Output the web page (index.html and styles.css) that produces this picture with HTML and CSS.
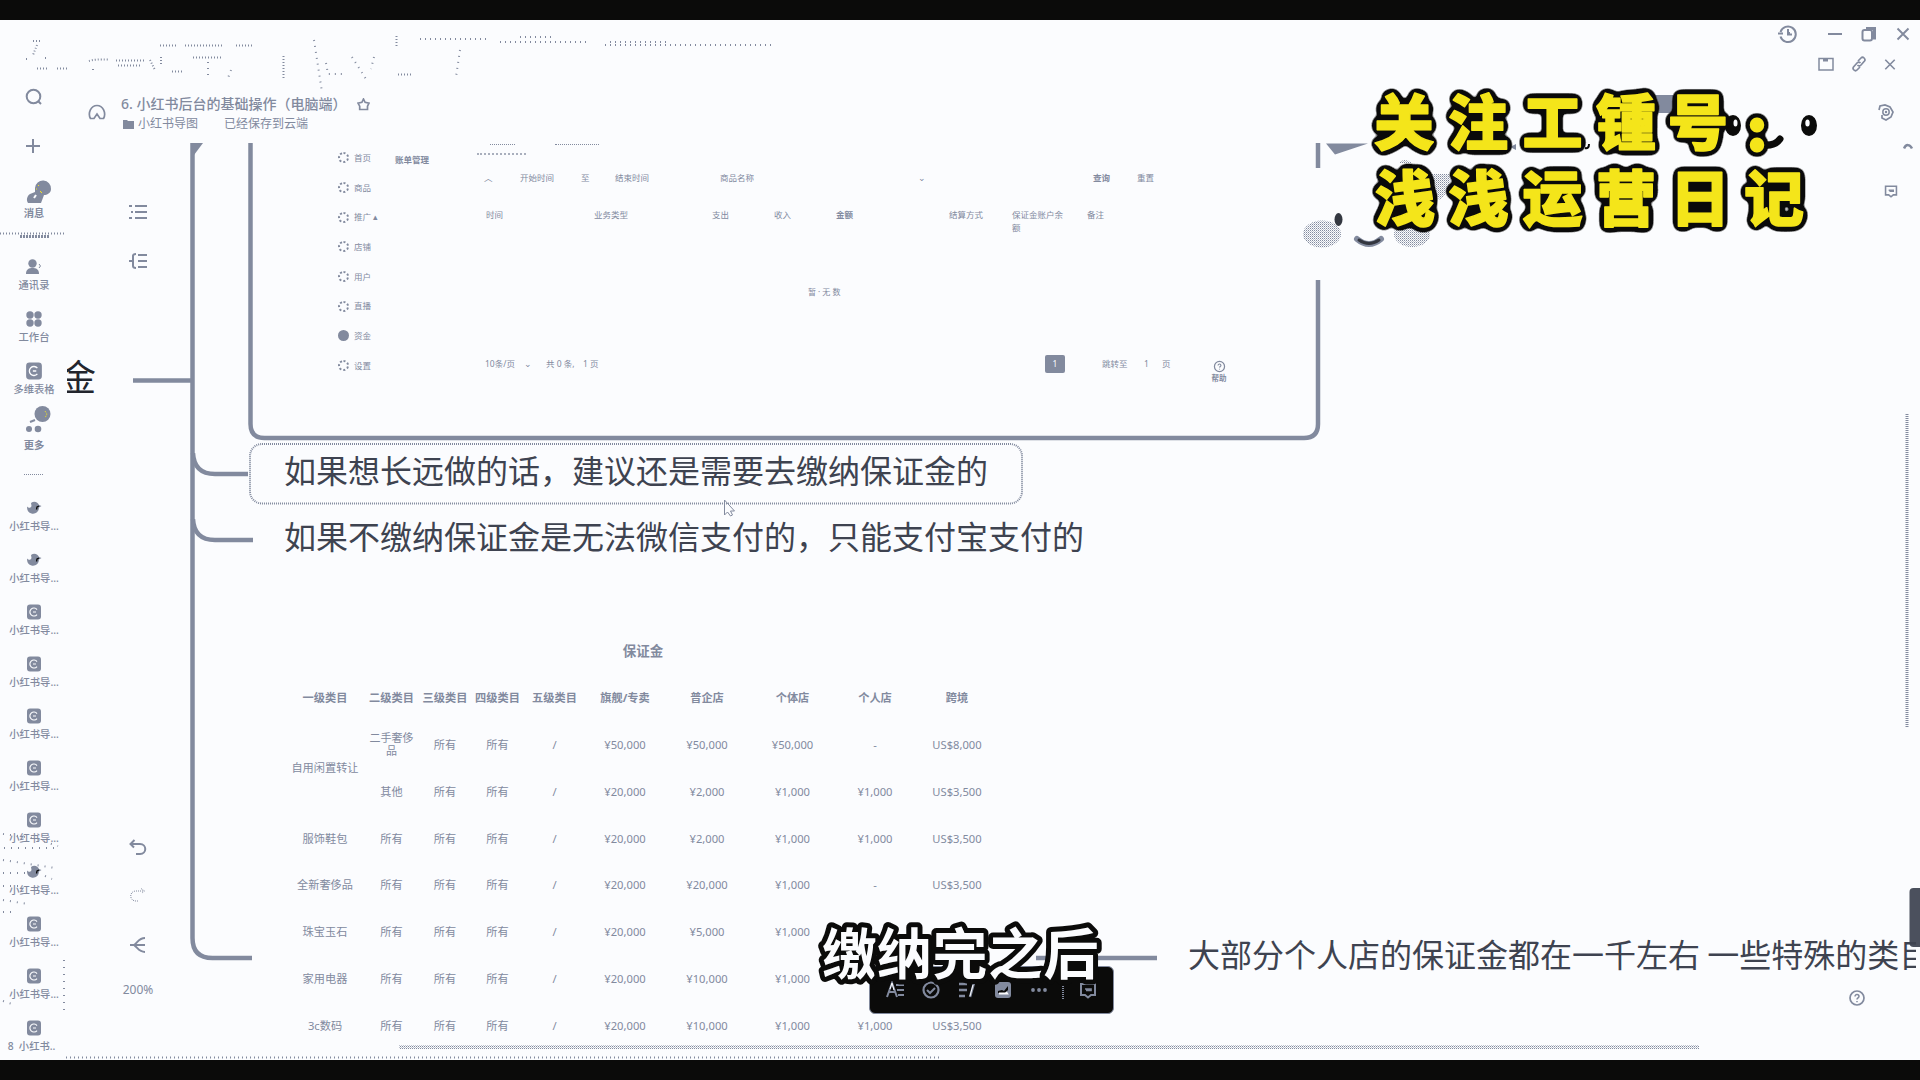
FILE: index.html
```html
<!DOCTYPE html>
<html lang="zh-CN">
<head>
<meta charset="utf-8">
<title>6. 小红书后台的基础操作（电脑端）</title>
<link rel="stylesheet" href="styles.css">
</head>
<body>
<svg class="defs" width="0" height="0">
  <defs>
    <pattern id="dots" width="2" height="2" patternUnits="userSpaceOnUse"><rect width="1" height="1" fill="#828a9e" stroke="none"/><rect x="1" y="1" width="1" height="1" fill="#828a9e" stroke="none" opacity=".5"/></pattern>
    <filter id="outline" x="-5%" y="-10%" width="110%" height="120%" color-interpolation-filters="sRGB">
      <feGaussianBlur in="SourceAlpha" stdDeviation="3.500"/>
      <feComponentTransfer><feFuncR type="linear" slope="0" intercept=".043"/><feFuncG type="linear" slope="0" intercept=".043"/><feFuncB type="linear" slope="0" intercept=".04"/><feFuncA type="linear" slope="16" intercept="-0.800"/></feComponentTransfer>
      <feMerge><feMergeNode/><feMergeNode in="SourceGraphic"/></feMerge>
    </filter>
    <symbol id="doc" viewBox="0 0 16 16"><rect x="1" y="0.5" width="14" height="15" rx="3" fill="#828a9e" stroke="none"/><path d="M11 5.500a4 4 0 1 0 0 5M7 8h3" fill="none" stroke="#fbfcfe" stroke-width="1.200"/></symbol>
    <symbol id="swirl" viewBox="0 0 16 16"><path d="M1 6.500c1.500 2 4 1.500 4.500-.5L5 3c3-2.500 7-1 8 2l2.500 1-2.500 1.500C13 12 9 14.500 5.500 13.500 2 12.500 1 10 1 6.500z" fill="#828a9e" stroke="none"/><path d="M10.500 9.500l.5-2.500 2-1" fill="none" stroke="#0b0b0a" stroke-width="1.300"/></symbol>
    <symbol id="help" viewBox="0 0 18 18"><circle cx="9" cy="9" r="7" fill="none" stroke="#828a9e" stroke-width="1.700"/><path d="M7 7.500c0-2.700 4-2.500 4 0 0 1.400-2 1.500-2 3M9 12v1.200" fill="none" stroke="#828a9e" stroke-width="1.500"/></symbol>
    <symbol id="note" viewBox="0 0 18 18"><path d="M2 3h14v11h-4l-3 2.500L6 14H2z" fill="none" stroke="#828a9e" stroke-width="2"/><path d="M6 8h6v1.500H7" fill="none" stroke="#828a9e" stroke-width="1.700"/></symbol>
    <symbol id="close" viewBox="0 0 14 14"><path d="M1.500 1.500l11 11M12.500 1.500l-11 11" stroke="#828a9e" stroke-width="1.900"/></symbol>
  </defs>
</svg>
<div class="screen">
  <div class="bar"></div>
  <div class="app">

    <nav class="sidebar">
      <div class="quick"><svg width="18" height="18" viewBox="0 0 18 18"><circle cx="8.500" cy="8.500" r="6.800"/><path d="M13 13l3 3"/></svg></div>
      <div class="quick"><svg width="16" height="16" viewBox="0 0 16 16"><path d="M1 8h14M8 1v14"/></svg></div>
      <div class="item msg"><svg width="30" height="24" viewBox="0 0 30 24"><path class="f" d="M10 8a8 8 0 0 1 16 1c0 4-4 6-7 6l-3 8H3c-2-3-1-7 2-9l5-2z"/><path d="M11 15l-2 3" stroke="#fbfcfe"/><path d="M13 5l1 1M11 9h1M15 11l2 2" stroke="#f4e51a" stroke-width="1"/></svg><span>消息</span></div>
      <div class="clip"></div>
      <div class="item"><svg width="18" height="18" viewBox="0 0 18 18"><circle class="f" cx="7.500" cy="5.500" r="4.200"/><path class="f" d="M1 16c0-5 3-6 6.500-6s6.500 1 6.500 6z"/><path d="M14 6l1.500 2-1.500 2" stroke-width="1"/></svg><span>通讯录</span></div>
      <div class="item"><svg width="18" height="18" viewBox="0 0 18 18"><circle class="f" cx="5" cy="5" r="3.700"/><circle class="f" cx="13" cy="5" r="3.700"/><circle class="f" cx="5" cy="13" r="3.700"/><circle class="f" cx="13" cy="13" r="3.700"/></svg><span>工作台</span></div>
      <div class="item"><svg width="18" height="18"><use href="#doc"/></svg><span>多维表格</span></div>
      <div class="item more"><svg width="30" height="28" viewBox="0 0 30 28"><circle class="f" cx="17.500" cy="9" r="8"/><path d="M20 6l2 3-2 4" stroke="#f4e51a" stroke-width="1" stroke-dasharray="1 1"/><circle class="f" cx="4" cy="24" r="3"/><circle class="f" cx="13" cy="24" r="3.300"/><path d="M5 17l5-2"/></svg><span>更多</span></div>
      <div class="sep"></div>
      <div class="item"><svg width="16" height="16"><use href="#swirl"/></svg><span>小红书导...</span></div>
      <div class="item"><svg width="16" height="16"><use href="#swirl"/></svg><span>小红书导...</span></div>
      <div class="item"><svg width="16" height="16"><use href="#doc"/></svg><span>小红书导...</span></div>
      <div class="item"><svg width="16" height="16"><use href="#doc"/></svg><span>小红书导...</span></div>
      <div class="item"><svg width="16" height="16"><use href="#doc"/></svg><span>小红书导...</span></div>
      <div class="item"><svg width="16" height="16"><use href="#doc"/></svg><span>小红书导...</span></div>
      <div class="item"><svg width="16" height="16"><use href="#doc"/></svg><span>小红书导...</span></div>
      <div class="item"><svg width="16" height="16"><use href="#swirl"/></svg><span>小红书导...</span></div>
      <div class="item"><svg width="16" height="16"><use href="#doc"/></svg><span>小红书导...</span></div>
      <div class="item"><svg width="16" height="16"><use href="#doc"/></svg><span>小红书导...</span></div>
      <div class="item last"><svg width="16" height="16"><use href="#doc"/></svg><span>8&nbsp; 小红书..</span></div>
    </nav>

    <div class="work">
      <div class="wincontrols">
        <div class="row one">
          <svg width="20" height="20" viewBox="0 0 20 20"><path d="M2.500 8a7.800 7.800 0 1 1 0 4.500M0 9.500h5"/><path d="M10 5v5.500h4M11 8v2"/></svg>
          <svg width="14" height="4" viewBox="0 0 14 4"><path d="M0 2h14"/></svg>
          <svg width="16" height="16" viewBox="0 0 16 16"><rect x="1.500" y="4" width="9.500" height="10.500" rx="2"/><path d="M5 2.500h8.500V12H12" stroke-width="3"/></svg>
          <svg width="14" height="14"><use href="#close"/></svg>
        </div>
        <div class="row two">
          <svg width="16" height="14" viewBox="0 0 16 14"><path d="M1 1.500h14v11.500H1z" stroke-width="1.500"/><path d="M5 3h5" stroke-width="3"/></svg>
          <svg width="16" height="16" viewBox="0 0 16 16"><path d="M7 5l3-3c2-2 5 1 3.500 3L10 9c-1 1-2.500 1-3.500 0M9 11l-3 3c-2 2-5-1-3.500-3L6 7c1-1 2.500-1 3.500 0" stroke-width="1.700"/></svg>
          <svg width="12" height="13"><use href="#close"/></svg>
        </div>
      </div>
      <header class="dochead">
        <svg class="home" width="18" height="18" viewBox="0 0 18 18"><path d="M6 15.500H2.500C-.5 10 3 2.500 9 2.500s9.500 7.500 6.500 13H12L9 11z"/></svg>
        <div class="names">
          <div class="title"><span>6. 小红书后台的基础操作（电脑端）</span><svg width="13" height="13" viewBox="0 0 13 13"><path d="M6.500 1l1.600 3.300 3.900.8-1.500 3v3.400H2.700V8.100L1 5.100l3.900-.8z"/></svg></div>
          <div class="path"><svg width="11" height="10" viewBox="0 0 11 10"><path class="f" d="M0 1h4l1 1h6v8H0z"/></svg><span>小红书导图</span><span class="saved">已经保存到云端</span></div>
        </div>
      </header>
      <div class="body">
        <div class="tools">
          <svg width="18" height="16" viewBox="0 0 18 16"><path d="M6 2h12M6 8h12M6 14h12" /><path d="M0 2h3M2 8h2M0 14h3"/></svg>
          <svg width="18" height="16" viewBox="0 0 18 16"><path d="M9 2h9M9 8h9M9 14h9M7 1q-3 0-3 2v10q0 2 3 2M0 8h5"/></svg>
          <svg class="undo" width="18" height="18" viewBox="0 0 18 18"><path d="M1 6h10c7 0 7 10 0 10H7M5.500 2L1.500 6l3.500 3.500"/></svg>
          <svg width="18" height="18" viewBox="0 0 18 18"><path d="M14 4H7C0 4 0 14 7 14h2M12 1.500L15.500 4 13 6" stroke-width="1" stroke-dasharray="1 1"/></svg>
          <svg width="18" height="18" viewBox="0 0 18 18"><path d="M1 9h15M16 2C10 2 9 6 5 9c4 3 5 7 11 7"/></svg>
          <span>200%</span>
        </div>
        <div class="rail">
          <svg class="gear" width="18" height="18" viewBox="0 0 18 18"><path d="M2 7L3 3l5-1 5 2 3 5-2 5-5 3-4-2v-3" stroke-width="1.700"/><circle cx="9" cy="9" r="3.200" stroke-width="1.500"/><circle class="f" cx="9" cy="9" r="1.200"/></svg>
          <svg class="caret" width="10" height="8" viewBox="0 0 10 8"><path d="M1 5.500c2-5 6-4 8 0" stroke-width="2.500"/></svg>
          <svg class="cmt" width="16" height="14"><use href="#note"/></svg>
          <svg class="hlp" width="18" height="18"><use href="#help"/></svg>
        </div>
      </div>
    </div>

    <main class="canvas">
      <svg class="links" width="1920" height="1040" viewBox="0 20 1920 1040">
        <g fill="none" stroke="#828a9e" stroke-width="4.500">
          <path d="M192.500 143V938q0 20 20 20H252"/>
          <path d="M133 380.500h59M193 453q1 21 22 21h33M193 519q1 21 22 21h38M1036 958h121"/>
          <path d="M250.500 143V424q0 14 14 14H1304q14 0 14-14V280M1318 143v25"/>
        </g>
        <path d="M192 143h11l-9 12z" fill="#828a9e"/>
        <rect x="250" y="444" width="772" height="59.500" rx="12" fill="none" stroke="#828a9e" stroke-width="2" stroke-dasharray="1 1"/>
        <g fill="none" stroke="#828a9e" stroke-dasharray="1 2">
          <path d="M33 41h8M37 45l-4 10M26 59h2M45 58h1M37 68.500h12M57 68.500h12M89 61q5-2 20-1.500M93 70v-3M116 60.500h28M118 65.500h24M150 60l5 10M160 45.500h17M185 45.500h39M236 45.500h17M193 57.500h28M161 57v7M172 71.500h10M283.500 56v22M396.500 36v11M398 74.500h14"/>
          <path d="M208 62v17M314 40l8 52M326 63l2 11h14M352 57l14 22M374 57l-3 12M231 70l-3 8M460 50l-4 27" stroke-dasharray="1 5"/>
          <path d="M420 39h70M500 42h90M520 37h35M610 42h60M605 45h170" stroke-dasharray="1 4"/>
          <path d="M0 233.500h66"/>
          <path d="M3 834l30 4 25 8M4 848h50M3 860l52 8M3 873h22M45 876l7 3M3 886h20M3 900l25 4M3 912h10M3 1001l12 4M64 960v50" stroke-dasharray="1 6"/>
        </g>
        <rect x="399" y="1045" width="1300" height="4" fill="url(#dots)"/>
        <path d="M66 1057.500H942" stroke="#828a9e" stroke-width="2" stroke-dasharray="1 3"/>
        <path d="M1907 414V728" stroke="#828a9e" stroke-width="3" stroke-dasharray="1 1"/>
        <rect x="1909.500" y="888" width="14" height="59" rx="4" fill="#4b505d"/>
        <path d="M724.500 500v15l3-3 3 4 2-1-2-4h4z" fill="none" stroke="#828a9e" stroke-width="1"/>
        <g fill="url(#dots)"><ellipse cx="1322" cy="234" rx="19" ry="13.500"/><ellipse cx="1412" cy="234" rx="18" ry="13"/><path d="M1432 174h18q1 18-11 26zM1399 163q5-6 13 0z"/></g>
        <path d="M1326 143.500h42l-33 11z" fill="#828a9e"/>
        <ellipse cx="1338.500" cy="219.500" rx="4" ry="6.500" fill="#333740"/>
        <path d="M1357 239q12 10 24 0" fill="none" stroke="#828a9e" stroke-width="6" stroke-linecap="round"/>
        <path d="M1359 240q10 7 20 0" fill="none" stroke="#33363f" stroke-width="3" stroke-linecap="round"/>
      </svg>

      <div class="root"><span>金</span></div>

      <section class="shot">
        <div class="menu">
          <div><i></i>首页</div><div><i></i>商品</div><div><i></i>推广 ▴</div><div><i></i>店铺</div>
          <div><i></i>用户</div><div><i></i>直播</div><div><i class="solid"></i>资金</div><div><i></i>设置</div>
        </div>
        <b class="sub">账单管理</b>
        <div class="panel">
          <div class="tabs"><i></i><i></i></div>
          <div class="filters"><span>︿</span><span>开始时间</span><span>至</span><span>结束时间</span><span>商品名称</span><span>⌄</span><b>查询</b><span>重置</span></div>
          <div class="heads"><span>时间</span><span>业务类型</span><span>支出</span><span>收入</span><b>金额</b><span>结算方式</span><span>保证金账户余额</span><span>备注</span></div>
          <div class="empty">暂 · 无 数</div>
          <div class="pager"><span>10条/页</span><span>⌄</span><span>共 0 条,</span><span>1 页</span><em>1</em><span>跳转至</span><span>1</span><span>页</span><span class="aid"><svg width="13" height="13"><use href="#help" width="13" height="13"/></svg>帮助</span></div>
        </div>
      </section>

      <div class="node n1">如果想长远做的话，建议还是需要去缴纳保证金的</div>
      <div class="node n2">如果不缴纳保证金是无法微信支付的，只能支付宝支付的</div>
      <div class="node n3">大部分个人店的保证金都在一千左右 一些特殊的类目</div>

      <section class="fees">
        <b class="cap">保证金</b>
        <b>一级类目</b><b>二级类目</b><b>三级类目</b><b>四级类目</b><b>五级类目</b><b>旗舰/专卖</b><b>普企店</b><b>个体店</b><b>个人店</b><b>跨境</b>
        <span class="span2">自用闲置转让</span><span class="wrap">二手奢侈<br>品</span><span>所有</span><span>所有</span><span>/</span><span>¥50,000</span><span>¥50,000</span><span>¥50,000</span><span>-</span><span>US$8,000</span>
        <span>其他</span><span>所有</span><span>所有</span><span>/</span><span>¥20,000</span><span>¥2,000</span><span>¥1,000</span><span>¥1,000</span><span>US$3,500</span>
        <span>服饰鞋包</span><span>所有</span><span>所有</span><span>所有</span><span>/</span><span>¥20,000</span><span>¥2,000</span><span>¥1,000</span><span>¥1,000</span><span>US$3,500</span>
        <span>全新奢侈品</span><span>所有</span><span>所有</span><span>所有</span><span>/</span><span>¥20,000</span><span>¥20,000</span><span>¥1,000</span><span>-</span><span>US$3,500</span>
        <span>珠宝玉石</span><span>所有</span><span>所有</span><span>所有</span><span>/</span><span>¥20,000</span><span>¥5,000</span><span>¥1,000</span><span></span><span></span>
        <span>家用电器</span><span>所有</span><span>所有</span><span>所有</span><span>/</span><span>¥20,000</span><span>¥10,000</span><span>¥1,000</span><span></span><span></span>
        <span>3c数码</span><span>所有</span><span>所有</span><span>所有</span><span>/</span><span>¥20,000</span><span>¥10,000</span><span>¥1,000</span><span>¥1,000</span><span>US$3,500</span>
      </section>

      <div class="toolbar">
        <svg width="18" height="18" viewBox="0 0 18 18"><path d="M1 16L6 2l5 14M3 11h6M10 4h8M11 9h7M12 14h6"/><path d="M4 8l2-6 2 7" stroke="#fbfcfe" stroke-width="1"/></svg>
        <svg width="18" height="18" viewBox="0 0 18 18"><circle cx="9" cy="9" r="7.500" stroke-width="2.200"/><path d="M5 9l3 3 5-5"/></svg>
        <svg width="18" height="18" viewBox="0 0 18 18"><path d="M1 3h8M1 9h8M1 15h6M16 2l-4 14" stroke-width="2.500"/><path d="M15 4l-3 11" stroke="#fbfcfe" stroke-width="1"/></svg>
        <svg width="18" height="18" viewBox="0 0 18 18"><rect class="f" x="1" y="1" width="16" height="16" rx="3"/><path d="M4 10l4-1 2 1 4-5v4l-3 3H4z" fill="#0b0b0a" stroke="none"/><path d="M5 12.500h8l-1-1.500" stroke="#fbfcfe"/></svg>
        <svg width="18" height="18" viewBox="0 0 18 18"><circle class="f" cx="3" cy="9" r="1.900"/><circle class="f" cx="9" cy="9" r="1.900"/><circle class="f" cx="15" cy="9" r="1.900"/></svg>
        <i></i>
        <svg width="18" height="18"><use href="#note"/></svg>
      </div>
    </main>

    <svg class="overlay" width="1920" height="1040" viewBox="0 20 1920 1040">
      <path d="M1655 95h24v14h-6v4h-18zM1510 147l6-3v6z" fill="#828a9e"/>
      <g fill="#0b0b0a"><ellipse cx="1733" cy="125.500" rx="8" ry="10.500"/><ellipse cx="1809" cy="125.500" rx="8" ry="10.500"/></g>
      <path d="M1764 145q11 1 16-6" fill="none" stroke="#0b0b0a" stroke-width="7" stroke-linecap="round"/>
      <path d="M1585 148q4 1 4-4" fill="none" stroke="#0b0b0a" stroke-width="2"/>
      <g class="promo" filter="url(#outline)"><text y="145" x="1404 1478 1552.500 1626 1698">关注工锺号</text><text class="colon" y="150" x="1757">:</text><text y="221" x="1405 1478.500 1552.500 1626 1700 1774">浅浅运营日记</text></g>
      <g fill="#fbfcfe"><ellipse cx="1735.500" cy="123" rx="2" ry="3.500"/><ellipse cx="1807.500" cy="123" rx="2.200" ry="3.500"/></g>
      <text class="caption" y="973.500" x="849.500 904.500 960 1015.500 1071">缴纳完之后</text>
    </svg>
  </div>
  <div class="bar"></div>
</div>
</body>
</html>
```
FILE: styles.css
```css
* { box-sizing: border-box; }
body { margin: 0; background: #fbfcfe; color: #828a9e; font-family: "Noto Sans", "Noto Sans CJK SC", sans-serif; }
.defs { position: absolute; }
.screen { width: 1920px; height: 1080px; display: flex; flex-direction: column; overflow: hidden; }
.bar { height: 20px; background: #0b0b0a; flex: none; }
.app { flex: 1; position: relative; display: flex; min-height: 0; overflow: hidden; }
svg { flex: none; fill: none; stroke: #828a9e; stroke-width: 2; }
.f { fill: #828a9e; stroke: none; }

.sidebar { width: 66px; flex: none; padding-top: 52px; position: relative; z-index: 2; }
.quick { height: 49px; display: flex; align-items: center; padding-left: 25px; }
.item { height: 52px; padding-top: 6px; display: flex; flex-direction: column; align-items: center; font-size: 10.300px; font-weight: 500; line-height: 12px; width: 68px; white-space: nowrap; }
.item svg { height: 16px; margin: 4px 0; }
.item svg[width="18"] { height: 18px; margin: 3px 0; }
.item.msg { margin-top: 4px; font-weight: 700; }
.item.msg svg { height: 24px; margin: 0 0 3px 12px; }
.clip { height: 23px; margin: 0 16px 0 20px; background: repeating-linear-gradient(90deg, #828a9e 0 2px, transparent 2px 3px) center 9px / 30px 3px no-repeat; }
.item.more { padding-top: 0; font-weight: 700; }
.item.more svg { height: 28px; margin: 0 0 6px 12px; }
.sep { height: 33px; margin: 0 22px 0 24px; background: repeating-linear-gradient(90deg, #828a9e 0 1px, transparent 1px 2px) center 17px / 100% 1px no-repeat; }
.last span { margin-left: -5px; }

.work { flex: 1; display: flex; flex-direction: column; position: relative; z-index: 2; }
.wincontrols { height: 64px; }
.row { display: flex; align-items: center; justify-content: flex-end; }
.one { height: 28px; padding-right: 10px; gap: 19px; }
.one svg:nth-child(1) { margin-right: 11px; }
.two { height: 32px; padding-right: 24px; gap: 17px; }
.dochead { height: 60px; display: flex; padding-left: 22px; }
.home { margin-top: 19px; }
.names { margin-left: 15px; padding-top: 10px; }
.title { display: flex; align-items: center; gap: 11px; font-size: 14px; line-height: 20px; font-weight: 500; height: 20px; white-space: nowrap; }
.title svg, .home { stroke-width: 1.700; }
.path { display: flex; align-items: center; gap: 4px; font-size: 12px; line-height: 19px; margin-left: 2px; }
.saved { margin-left: 22px; }
.body { flex: 1; display: flex; justify-content: space-between; }
.tools { width: 40px; margin-left: 52px; padding-top: 60px; display: flex; flex-direction: column; align-items: center; font-size: 12px; }
.tools svg + svg { margin-top: 33px; }
.tools svg.undo { margin-top: 569px; }
.tools svg.undo + svg, .tools svg.undo + svg + svg { margin-top: 31px; }
.tools span { margin-top: 27px; }
.rail { width: 50px; display: flex; flex-direction: column; }
.gear { margin: -41px 0 0 7px; }
.caret { margin: 22px 0 0 33px; }
.cmt { margin: 33px 0 0 13px; }
.hlp { margin: 791px 0 0 -22px; }

.canvas { position: absolute; inset: 0; z-index: 1; overflow: hidden; }
.links { position: absolute; left: 0; top: 0; stroke: none; }
.root { position: absolute; left: 67px; top: 330px; width: 40px; height: 56px; overflow: hidden; color: #22252d; font-size: 36px; line-height: 56px; }
.root span { margin-left: -7px; }
.node { position: absolute; font-size: 32px; line-height: 44px; color: #3e4350; white-space: nowrap; font-family: "Noto Sans CJK SC", sans-serif; }
.n1 { left: 284px; top: 427px; }
.n2 { left: 284px; top: 493px; }
.n3 { left: 1188px; top: 911px; width: 728px; overflow: hidden; }

.shot { position: absolute; left: 336px; top: 123px; width: 970px; display: flex; font-size: 8.500px; line-height: 14px; white-space: nowrap; }
.menu { width: 59px; }
.menu div { height: 29.700px; display: flex; align-items: center; gap: 5px; }
.menu i { width: 11px; height: 11px; margin-left: 2px; border: 2px dotted #828a9e; border-radius: 50%; }
.menu i.solid { background: #828a9e; }
.sub { width: 82px; padding-top: 10px; }
.panel { flex: 1; }
.tabs { height: 12px; display: flex; gap: 40px; padding: 1px 0 0 13px; border-bottom: 2px dotted #a9afbd; width: 49px; }
.tabs i { width: 25px; height: 1px; flex: none; border-top: 1px dotted #828a9e; }
.tabs i + i { width: 44px; }
.filters, .heads, .pager { display: grid; }
.filters { grid-template-columns: 36px 61px 34px 105px 198px 175px 44px 40px; margin: 16px 0 0 7px; }
.heads { grid-template-columns: 108px 118px 62px 62px 113px 63px 75px 30px; margin: 23px 0 0 9px; }
.heads span:nth-child(7) { white-space: normal; width: 54px; line-height: 13px; }
.empty { margin: 51px 0 0 331px; font-size: 8px; }
.pager { grid-template-columns: 39px 22px 37px 462px 57px 42px 18px 47px 20px; margin: 53px 0 0 8px; align-items: center; height: 20px; }
.pager em { width: 20px; height: 18px; background: #828a9e; color: #fbfcfe; text-align: center; font-style: normal; line-height: 18px; border-radius: 2px; }
.pager .aid { display: flex; flex-direction: column; align-items: center; line-height: 10px; margin: 8px 0 -8px; height: 24px; font-size: 7.500px; font-weight: 700; }

.fees { position: absolute; left: 287px; top: 607.600px; display: grid; grid-template-columns: 76px 57px 50px 55px 59px 82px 82px 89px 76px 88px; grid-auto-rows: 46.900px; align-items: center; text-align: center; font-size: 11.200px; line-height: 12px; white-space: nowrap; }
.fees .cap { grid-column: 1 / -1; font-size: 13.500px; line-height: 18px; margin-right: 2px; }
.fees .span2 { grid-row: span 2; }
.fees .wrap { line-height: 12.500px; font-size: 11px; }

.toolbar { position: absolute; left: 869px; top: 946px; width: 245px; height: 48px; padding: 0 16px; background: #0b0b0a; border: 1.500px solid #828a9e; border-radius: 6px; display: flex; align-items: center; gap: 18px; }
.toolbar i { width: 2px; height: 14px; margin: 6px -3px 0 -4px; background: repeating-linear-gradient(#828a9e 0 1px, transparent 1px 2px); }

.overlay { position: absolute; left: 0; top: 0; z-index: 3; stroke: none; pointer-events: none; }
.overlay text { text-anchor: middle; font-family: "Noto Sans CJK SC", sans-serif; paint-order: stroke fill; stroke-linejoin: round; }
.promo text { font-size: 60px; font-weight: 900; fill: #f4e51a; stroke: #f4e51a; stroke-width: 1.500px; }
.promo .colon { font-size: 54px; stroke-width: 3px; stroke-linejoin: miter; }
.overlay .caption { font-size: 55px; font-weight: 700; fill: #fbfcfe; stroke: #0b0b0a; stroke-width: 10px; }
```
